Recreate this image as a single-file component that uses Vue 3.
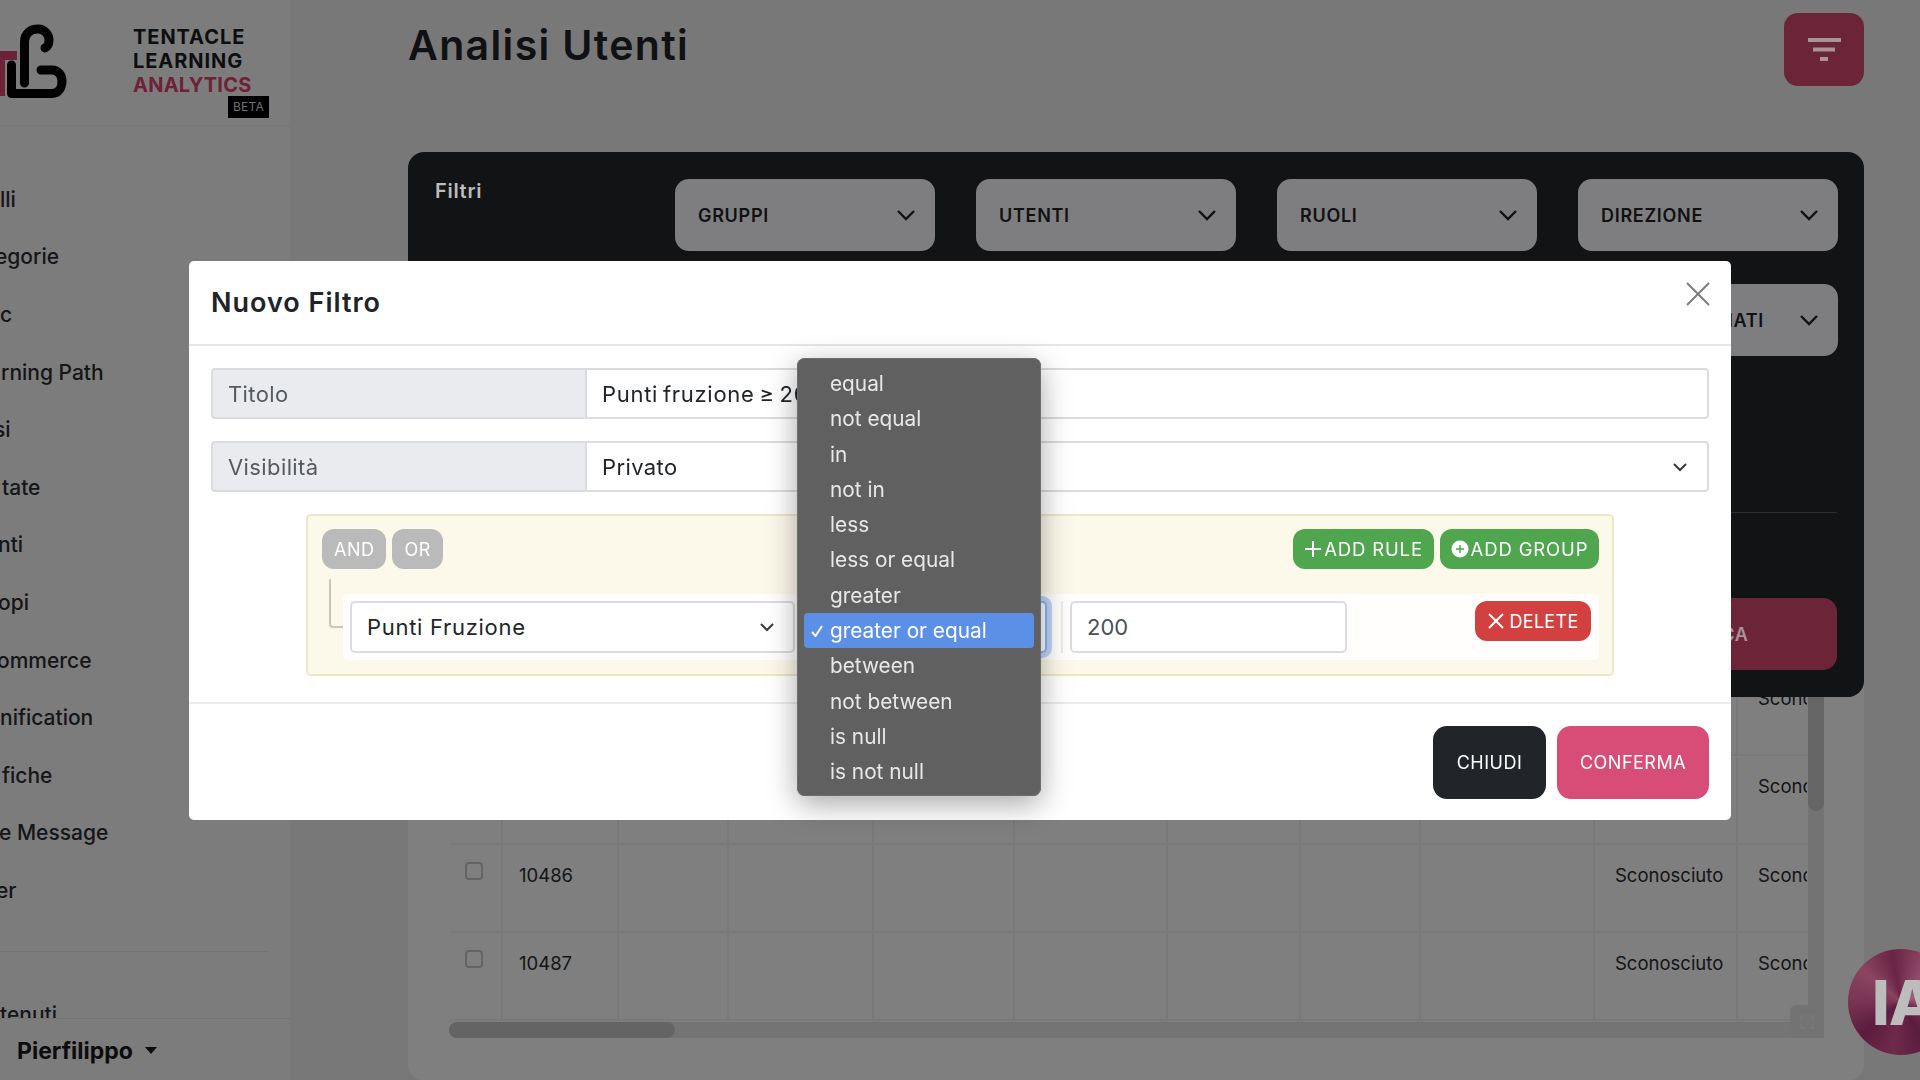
<script setup>
const navItems = [
  { t: 'lli', x: 0 }, { t: 'egorie', x: -5 }, { t: 'c', x: 0 }, { t: 'rning Path', x: 1 },
  { t: 'si', x: -6 }, { t: 'tate', x: 2 }, { t: 'nti', x: -2 }, { t: 'opi', x: -2 },
  { t: 'ommerce', x: -3 }, { t: 'nification', x: 0 }, { t: 'fiche', x: 2 }, { t: 'e Message', x: -1 }, { t: 'er', x: -4 }
]
const filters = ['GRUPPI', 'UTENTI', 'RUOLI', 'DIREZIONE']
const operators = ['equal', 'not equal', 'in', 'not in', 'less', 'less or equal', 'greater', 'greater or equal', 'between', 'not between', 'is null', 'is not null']
const cols = [54, 116, 110, 145, 141, 153, 133, 120, 174, 143, 69]
const rows = [
  { id: '', a: 'Scono', b: '', h: 88 },
  { id: '', a: 'Scono', b: '', h: 89 },
  { id: '10486', a: 'Scono', b: 'Sconosciuto', h: 88, check: true },
  { id: '10487', a: 'Scono', b: 'Sconosciuto', h: 88, check: true }
]
</script>

<template>
  <div class="page">
    <aside class="sidebar">
      <div class="brand">
        <svg class="logo" viewBox="0 21 70 80" width="70" height="80">
          <path d="M0 51H17V60H5V96H0Z" fill="#d9446e" />
          <path d="M24.5 83V42C24.5 33 31 29 38 29C45 29 49 35 49 40C49 44 47 47 45 48" fill="none" stroke="#050505" stroke-width="9" stroke-linecap="round" />
          <path d="M11.5 65V93.5H52C59 93.5 62 87 62 81C62 75 58 70 52 70H41" fill="none" stroke="#050505" stroke-width="9" stroke-linecap="round" stroke-linejoin="round" />
        </svg>
        <div class="brand-text">
          <div>TENTACLE</div>
          <div>LEARNING</div>
          <div class="pink">ANALYTICS</div>
          <span class="beta">BETA</span>
        </div>
      </div>
      <nav class="nav">
        <a v-for="item in navItems" :key="item.t"><span :style="{ marginLeft: item.x + 'px' }">{{ item.t }}</span></a>
      </nav>
      <div class="nav-divider"></div>
      <div class="nav-clipped"><span>tenuti</span></div>
      <div class="user">
        <strong>Pierfilippo</strong>
        <i class="caret"></i>
      </div>
    </aside>

    <main class="main">
      <header class="top">
        <h1>Analisi Utenti</h1>
        <button class="filter-toggle" aria-label="Filtri">
          <svg viewBox="0 0 33 23" width="33" height="23">
            <path d="M0 2H33M5 11.5H27M12 21H20" stroke="#a8939b" stroke-width="4" />
          </svg>
        </button>
      </header>

      <section class="panel">
        <div class="panel-title">Filtri</div>
        <div class="filter-grid">
          <div v-for="f in filters" :key="f" class="pick">
            <span>{{ f }}</span>
            <svg viewBox="0 0 20 12" width="20" height="12"><path d="M2 2L10 10L18 2" fill="none" stroke="#111" stroke-width="2.4" /></svg>
          </div>
          <div class="pick slot-last">
            <span class="pick-end">NATI</span>
            <svg viewBox="0 0 20 12" width="20" height="12"><path d="M2 2L10 10L18 2" fill="none" stroke="#111" stroke-width="2.4" /></svg>
          </div>
        </div>
        <div class="panel-rule"></div>
        <div class="panel-actions"><button class="search">RICERCA</button></div>
      </section>

      <section class="card">
        <div class="table">
          <div v-for="(r, i) in rows" :key="i" class="row" :style="{ height: r.h + 'px' }">
            <div v-for="(c, n) in cols" :key="n" class="cell" :style="{ width: c + 'px' }">
              <span v-if="n === 0 && r.check" class="check"></span>
              <span v-if="n === 1 && r.id">{{ r.id }}</span>
              <span v-if="n === 9 && r.b">{{ r.b }}</span>
              <span v-if="n === 10" class="clip">{{ r.a }}</span>
            </div>
          </div>
          <div class="vscroll"><div class="vthumb"></div></div>
        </div>
        <div class="hscroll">
          <div class="hthumb"></div>
          <div class="expand">
            <svg viewBox="0 0 14 14" width="14" height="14"><path d="M1 5V1H5M9 1H13V5M13 9V13H9M5 13H1V9" fill="none" stroke="#fff" stroke-opacity=".45" stroke-width="1.4" /></svg>
          </div>
        </div>
      </section>
    </main>

    <div class="assistant"><span>IA</span></div>

    <div class="backdrop"></div>

    <div class="modal-wrap">
      <div class="modal">
        <div class="modal-head">
          <h2>Nuovo Filtro</h2>
          <button class="close" aria-label="Chiudi">
            <svg viewBox="0 0 24 24" width="24" height="24"><path d="M1 1L23 23M23 1L1 23" stroke="#7c7c7c" stroke-width="2" /></svg>
          </button>
        </div>
        <div class="modal-body">
          <div class="field">
            <label>Titolo</label>
            <div class="control title-value">Punti fruzione ≥ 200</div>
          </div>
          <div class="field">
            <label>Visibilità</label>
            <div class="control chevroned">
              <span>Privato</span>
              <svg viewBox="0 0 16 10" width="16" height="10"><path d="M2 2L8 8L14 2" fill="none" stroke="#343a40" stroke-width="2" /></svg>
            </div>
          </div>
          <div class="group">
            <div class="group-head">
              <div class="logic">
                <button>AND</button>
                <button>OR</button>
              </div>
              <div class="actions">
                <button class="green add-rule">
                  <svg viewBox="0 0 18 18" width="18" height="18"><path d="M9 1V17M1 9H17" stroke="#fff" stroke-width="2" /></svg>
                  ADD RULE
                </button>
                <button class="green add-group">
                  <svg viewBox="0 0 18 18" width="18" height="18"><circle cx="9" cy="9" r="8.5" fill="#fff" /><path d="M9 5V13M5 9H13" stroke="#4fa64f" stroke-width="1.5" /></svg>
                  ADD GROUP
                </button>
              </div>
            </div>
            <div class="rule">
              <span class="link"></span>
              <div class="input sel-field">
                <span>Punti Fruzione</span>
                <svg viewBox="0 0 16 10" width="16" height="10"><path d="M2 2L8 8L14 2" fill="none" stroke="#343a40" stroke-width="2" /></svg>
              </div>
              <div class="input sel-op"></div>
              <span class="sep"></span>
              <div class="input value">200</div>
              <button class="delete">
                <svg viewBox="0 0 18 18" width="18" height="18"><path d="M2 2L16 16M16 2L2 16" stroke="#fff" stroke-width="2" /></svg>
                DELETE
              </button>
              <ul class="menu">
                <li v-for="o in operators" :key="o" :class="{ on: o === 'greater or equal' }">
                  <svg v-if="o === 'greater or equal'" class="tick" viewBox="0 0 12 12" width="12" height="12"><path d="M1 7L4.5 11L11 1" fill="none" stroke="#fff" stroke-width="2" /></svg>
                  {{ o }}
                </li>
              </ul>
            </div>
          </div>
        </div>
        <div class="modal-foot">
          <button class="dark">CHIUDI</button>
          <button class="primary">CONFERMA</button>
        </div>
      </div>
    </div>
  </div>
</template>

<style>
html, body { margin: 0; height: 100%; overflow: hidden; background: #f0f0f0; }
</style>

<style scoped>
* { box-sizing: border-box; }
button { font: inherit; border: 0; cursor: pointer; }
.page {
  width: 1920px; height: 1080px; overflow: hidden; display: flex; position: relative;
  font-family: Inter, "Liberation Sans", sans-serif; color: #2a2c30; background: #f0f0f0;
}
.sidebar { width: 290px; flex: none; height: 1080px; background: #f9f9fb; display: flex; flex-direction: column; overflow: hidden; }
.brand { height: 127px; flex: none; border-bottom: 2px solid #f1f1f3; display: flex; align-items: flex-start; padding-top: 21px; }
.logo { margin-right: 63px; overflow: visible; }
.brand-text { position: relative; font-size: 20px; line-height: 24px; font-weight: 700; color: #1b1d22; padding-top: 4px; letter-spacing: .95px; }
.pink { color: #d9446e; letter-spacing: .25px; }
.beta { position: absolute; left: 95px; top: 75px; width: 41px; height: 22px; background: #000; color: #ddd; font-size: 12px; line-height: 22px; text-align: center; font-weight: 400; letter-spacing: .2px; }
.nav { display: flex; flex-direction: column; padding-top: 43.5px; }
.nav a { height: 57.6px; display: flex; align-items: center; font-size: 21px; font-weight: 500; color: #2a2c30; }
.nav-divider { height: 1px; width: 268px; background: #eaeaec; margin-top: 32px; }
.nav-clipped { height: 66px; flex: none; overflow: hidden; font-size: 21px; font-weight: 500; padding-top: 51px; line-height: 24px; }
.user { height: 61px; flex: none; border-top: 1px solid #e6e6e8; display: flex; align-items: center; gap: 12px; padding: 3px 0 0 17px; font-size: 23px; color: #16181c; }
.user strong { font-weight: 700; }
.caret { width: 0; height: 0; border: 6px solid transparent; border-top: 7px solid #16181c; border-bottom: 0; }

.main { flex: 1; padding: 0 56px 0 118px; min-width: 0; }
.top { height: 152px; display: flex; justify-content: space-between; align-items: flex-start; padding-top: 13px; }
h1 { margin: 7px 0 0; font-size: 41px; line-height: 50px; font-weight: 600; color: #212329; letter-spacing: 1.35px; }
.filter-toggle { position: relative; z-index: 6; width: 80px; height: 73px; border-radius: 14px; background: #6c2439; display: flex; align-items: center; justify-content: center; }

.panel { height: 545px; background: #121315; border-radius: 16px; padding: 27px 27px 0; position: relative; z-index: 6; }
.panel-title { position: absolute; left: 27px; top: 27px; color: #bcbcbc; font-size: 20px; line-height: 24px; font-weight: 600; letter-spacing: .7px; }
.filter-grid { margin-left: 240px; display: grid; grid-template-columns: repeat(4, 260px); column-gap: 41px; row-gap: 33px; }
.pick { height: 72px; background: #7e7e80; border-radius: 14px; display: flex; align-items: center; justify-content: space-between; padding: 0 19px 0 23px; font-size: 18px; font-weight: 600; color: #111; letter-spacing: .7px; }
.slot-last { grid-column: 4; }
.pick-end { margin-left: auto; margin-right: 35px; }
.panel-rule { height: 1px; background: #2c2d30; margin-top: 156px; }
.panel-actions { display: flex; justify-content: flex-end; margin-top: 85px; }
.search { width: 260px; height: 72px; border-radius: 14px; background: #6c2439; color: #a8939b; font-size: 18px; font-weight: 600; letter-spacing: .6px; }

.card { background: #fefefe; height: 536px; margin-top: -153px; padding: 124px 40px 0 41px; border-radius: 0 0 16px 16px; position: relative; }
.table { position: relative; width: 1375px; }
.row { display: flex; border-bottom: 2px solid #f2f2f2; width: 1359px; overflow: hidden; }
.row:last-of-type { border-bottom: 0; }
.cell { flex: none; border-right: 2px solid #f2f2f2; padding: 19px 16px 0; font-size: 18.5px; line-height: 22px; white-space: nowrap; overflow: hidden; color: #2a2c30; }
.cell:first-child { padding-top: 17px; }
.cell:nth-child(n+10) { padding-left: 20px; }
.cell:last-child { border-right: 0; padding-right: 0; }
.clip { display: block; }
.check { display: block; width: 18px; height: 18px; border: 2px solid #c8c8cc; border-radius: 4px; background: #fff; }
.vscroll { position: absolute; right: 0; top: 0; width: 16px; height: 370px; background: #e6e6e6; }
.vthumb { width: 16px; height: 143px; background: #cccccc; border-radius: 0 0 8px 8px; }
.hscroll { width: 1375px; height: 16px; background: #e8e8e8; position: relative; margin-top: 1px; border-radius: 8px; }
.hthumb { width: 226px; height: 16px; background: #c8c8c8; border-radius: 8px; }
.expand { position: absolute; right: 1px; top: -17px; width: 33px; height: 33px; background: #e6e6e6; border-radius: 6px; display: flex; align-items: center; justify-content: center; }

.assistant {
  position: absolute; left: 1848px; top: 949px; width: 106px; height: 106px; border-radius: 50%; z-index: 6;
  background: conic-gradient(from 190deg, #6f2a4a, #5b1c3e, #7a3353, #8a4560, #6a2444, #8c4a66, #a0607a, #7a2c50, #5a1c3e, #6f2a4a);
  display: flex; align-items: center; padding-left: 24px; overflow: hidden;
}
.assistant span { color: #bdbdbd; font-size: 62px; font-weight: 800; letter-spacing: -1px; }

.backdrop { position: fixed; inset: 0; background: rgba(0, 0, 0, .5); z-index: 5; }
.modal-wrap { position: fixed; inset: 0; display: flex; justify-content: center; align-items: flex-start; padding-top: 261px; z-index: 10; }
.modal { width: 1542px; height: 559px; background: #fff; border-radius: 5px; display: flex; flex-direction: column; }
.modal-head { height: 85px; border-bottom: 2px solid #e6e6e8; display: flex; justify-content: space-between; align-items: flex-start; padding: 23px 22px 0; }
h2 { margin: 0; font-size: 27px; line-height: 38px; font-weight: 600; color: #212329; letter-spacing: 1px; }
.close { background: none; padding: 0; margin: -2px -1px 0 0; height: 24px; display: block; line-height: 0; }
.modal-body { flex: none; height: 358px; padding: 22px 22px 0; border-bottom: 2px solid #ececee; }
.field { display: flex; height: 51px; margin-bottom: 22px; font-size: 22px; color: #2a2c30; letter-spacing: .4px; }
.field label { width: 374px; background: #e9ebee; border: 2px solid #dadcdf; border-right: 0; border-radius: 4px 0 0 4px; padding: 0 15px; display: flex; align-items: center; color: #565a5f; }
.control { flex: 1; border: 2px solid #dadcdf; border-radius: 0 4px 4px 0; padding: 0 15px; display: flex; align-items: center; justify-content: space-between; color: #212529; white-space: nowrap; }
.title-value { letter-spacing: .7px; word-spacing: -2px; justify-content: flex-start; }
.chevroned { padding-right: 19px; }
.group { margin: 0 95px; height: 162px; border: 2px solid #ece7c5; background: #fdf9ea; border-radius: 5px; padding: 13px 13px 0 14px; }
.group-head { display: flex; justify-content: space-between; }
.logic, .actions { display: flex; gap: 6px; }
.logic button { height: 40px; padding: 0 12px; border-radius: 12px; background: #bababa; color: #fff; font-size: 18px; letter-spacing: .5px; }
.green { height: 40px; padding: 0; border-radius: 12px; background: #4fa64f; color: #fff; font-size: 18.5px; letter-spacing: .85px; display: flex; align-items: center; justify-content: center; gap: 2px; }
.add-rule { width: 141px; }
.add-group { width: 159px; }
.rule { position: relative; margin: 25px 0 0 21px; height: 66px; background: #fffefc; border-radius: 5px; display: flex; align-items: flex-start; padding: 7px 7px; }
.link { position: absolute; left: -14px; top: -15px; width: 14px; height: 49px; border-left: 2px solid #c9c7bb; border-bottom: 2px solid #c9c7bb; border-bottom-left-radius: 4px; }
.input { height: 52px; border: 2px solid #dadcdf; border-radius: 5px; background: #fff; font-size: 22px; display: flex; align-items: center; padding: 0 15px; color: #212529; }
.sel-field { width: 445px; justify-content: space-between; padding-right: 18px; letter-spacing: .7px; }
.sel-op { width: 244px; margin-left: 8px; border-color: #86b7fe; box-shadow: 0 0 0 5px #c2d4f8; }
.sep { width: 2px; height: 52px; background: #ebebeb; margin: 0 7px 0 14px; }
.value { width: 277px; color: #495057; }
.delete { margin-left: auto; margin-right: 1px; height: 40px; width: 116px; border-radius: 12px; background: #d24040; color: #fff; font-size: 18px; display: flex; align-items: center; justify-content: center; gap: 4px; letter-spacing: .3px; }
.menu {
  position: absolute; left: 454px; top: -236px; width: 244px; height: 438px; margin: 0; padding: 8px 7px; list-style: none;
  background: #606060; border-radius: 8px; box-shadow: inset 0 0 0 1px #6e6e6e, 0 8px 30px rgba(0, 0, 0, .35); z-index: 2;
  font-size: 20.8px; color: #e8e8e8;
}
.menu li { height: 35.3px; line-height: 35px; padding-left: 26px; border-radius: 4px; position: relative; }
.menu li.on { background: #5c8fe6; color: #fff; }
.tick { position: absolute; left: 7px; top: 12px; }
.modal-foot { flex: 1; display: flex; justify-content: flex-end; gap: 11px; padding: 22px 22px 0; }
.modal-foot button { height: 73px; border-radius: 14px; color: #fff; font-size: 18px; font-weight: 400; letter-spacing: .5px; }
.dark { width: 113px; background: #212529; }
.primary { width: 152px; background: #d84d78; }
</style>
